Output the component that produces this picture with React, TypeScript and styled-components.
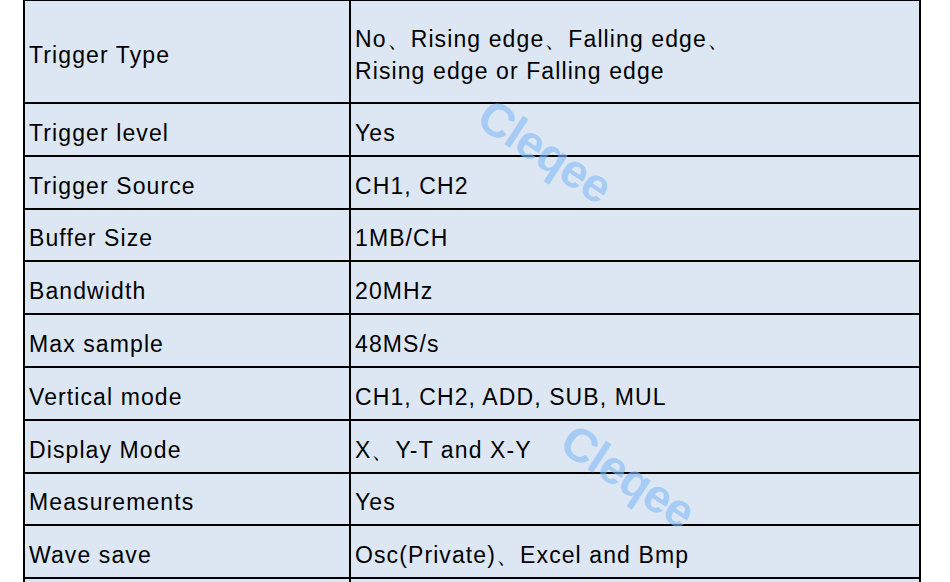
import styled, { createGlobalStyle } from "styled-components";

const GlobalStyle = createGlobalStyle`
    html, body {
        margin: 0;
        padding: 0;
        background: #ffffff;
        overflow: hidden;
    }
`;

const Page = styled.main`
    position: relative;
    width: 950px;
    height: 582px;
    overflow: hidden;
`;

const SpecTable = styled.table`
    border-collapse: collapse;
    margin: -1px 0 0 23px;
    width: 898px;
    table-layout: fixed;
    background-color: #dde7f3;
    font-family: "Liberation Sans", Arial, sans-serif;
    font-size: 23px;
    letter-spacing: 1.1px;
    line-height: 32px;
    color: #000;
`;

const Row = styled.tr<{ $tall?: boolean }>`
    height: ${(p) => (p.$tall ? "103px" : "52.8px")};
`;

const Cell = styled.td`
    border: 2px solid #000;
    padding: 7px 2px 0 4px;
    vertical-align: middle;
    white-space: nowrap;
`;

// watermark that sits over the table
const Watermark = styled.div<{ $x: number; $y: number }>`
    position: absolute;
    left: ${(p) => p.$x}px;
    top: ${(p) => p.$y}px;
    transform: translate(-50%, -50%) rotate(33deg);
    font-family: "Liberation Sans", Arial, sans-serif;
    font-weight: bold;
    font-size: 47px;
    letter-spacing: -1px;
    color: rgba(130, 185, 245, 0.6);
    pointer-events: none;
    white-space: nowrap;
`;

const specs: [string, string][] = [
    ["Trigger level", "Yes"],
    ["Trigger Source", "CH1, CH2"],
    ["Buffer Size", "1MB/CH"],
    ["Bandwidth", "20MHz"],
    ["Max sample", "48MS/s"],
    ["Vertical mode", "CH1, CH2, ADD, SUB, MUL"],
    ["Display Mode", "X、Y-T and X-Y"],
    ["Measurements", "Yes"],
    ["Wave save", "Osc(Private)、Excel and Bmp"],
];

export default function App() {
    return (
        <>
            <GlobalStyle />
            <Page>
                <SpecTable>
                    <colgroup>
                        <col style={{ width: 326 }} />
                        <col />
                    </colgroup>
                    <tbody>
                        <Row $tall>
                            <Cell>Trigger Type</Cell>
                            <Cell>
                                No、Rising edge、Falling edge、
                                <br />
                                Rising edge or Falling edge
                            </Cell>
                        </Row>
                        {specs.map(([name, value]) => (
                            <Row key={name}>
                                <Cell>{name}</Cell>
                                <Cell>{value}</Cell>
                            </Row>
                        ))}
                        <Row>
                            <Cell>&nbsp;</Cell>
                            <Cell>&nbsp;</Cell>
                        </Row>
                    </tbody>
                </SpecTable>
                <Watermark $x={545} $y={151}>Cleqee</Watermark>
                <Watermark $x={628} $y={476}>Cleqee</Watermark>
            </Page>
        </>
    );
}
